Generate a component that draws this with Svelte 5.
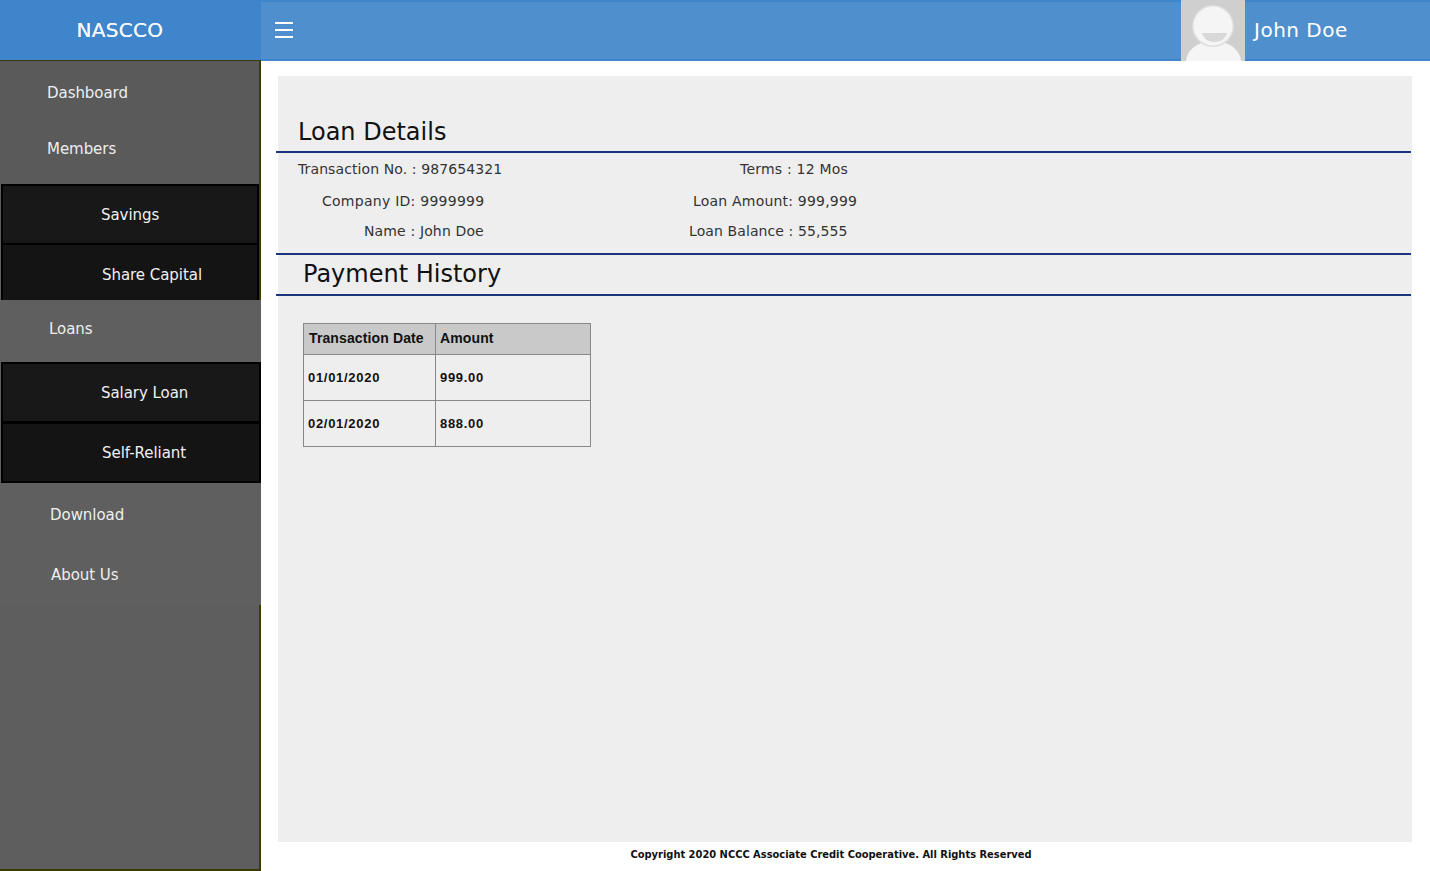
<script lang="ts">
	const menu = [
		{ label: 'Dashboard', pad: 47 },
		{ label: 'Members', pad: 47 }
	];
	const savings = [
		{ label: 'Savings', pad: 98 },
		{ label: 'Share Capital', pad: 99 }
	];
	const loans = [
		{ label: 'Salary Loan', pad: 98 },
		{ label: 'Self-Reliant', pad: 99 }
	];
	const lower = [
		{ label: 'Download', pad: 50 },
		{ label: 'About Us', pad: 51 }
	];
	const payments = [
		{ date: '01/01/2020', amount: '999.00' },
		{ date: '02/01/2020', amount: '888.00' }
	];
</script>

<div class="page">
	<header class="topbar">
		<div class="brand">NASCCO</div>
		<div class="bar">
			<button class="burger" aria-label="Menu">
				<span></span><span></span><span></span>
			</button>
			<div class="user">
				<svg class="avatar" viewBox="0 0 64 61" width="64" height="61" aria-hidden="true">
					<rect width="64" height="61" fill="#cfcfcf" />
					<path d="M5 61c1-12 13-20 27.500-20s26.500 8 27.500 20z" fill="#f5f5f5" />
					<circle cx="32" cy="26" r="21" fill="#dedede" />
					<circle cx="32" cy="26" r="19.500" fill="#f5f5f5" />
					<path d="M21 33h25c-1 5-6 9-12.500 9s-11.500-4-12.500-9z" fill="#d8d8d8" />
				</svg>
				<span class="username">John Doe</span>
			</div>
		</div>
	</header>

	<div class="body">
		<nav class="sidebar">
			<div class="group-top">
				{#each menu as item}
					<a class="item" style="padding-left:{item.pad}px">{item.label}</a>
				{/each}
			</div>
			<div class="sub first">
				{#each savings as item}
					<a class="subitem" style="padding-left:{item.pad}px">{item.label}</a>
				{/each}
			</div>
			<div class="lighter">
				<a class="item loans" style="padding-left:49px">Loans</a>
				<div class="sub second">
					{#each loans as item}
						<a class="subitem" style="padding-left:{item.pad}px">{item.label}</a>
					{/each}
				</div>
				{#each lower as item}
					<a class="item low" style="padding-left:{item.pad}px">{item.label}</a>
				{/each}
			</div>
		</nav>

		<main class="main">
			<section class="panel">
				<h2 class="loan-title">Loan Details</h2>
				<div class="details">
					<div class="row r1"><span class="left l1">Transaction No. : 987654321</span><span class="right t1">Terms : 12 Mos</span></div>
					<div class="row r2"><span class="left l2">Company ID: 9999999</span><span class="right t2">Loan Amount: 999,999</span></div>
					<div class="row r3"><span class="left l3">Name : John Doe</span><span class="right t3">Loan Balance : 55,555</span></div>
				</div>
				<h2 class="pay-title">Payment History</h2>
				<table>
					<thead>
						<tr><th class="c1">Transaction Date</th><th class="c2">Amount</th></tr>
					</thead>
					<tbody>
						{#each payments as p}
							<tr><td>{p.date}</td><td>{p.amount}</td></tr>
						{/each}
					</tbody>
				</table>
			</section>
			<footer class="copy">Copyright 2020 NCCC Associate Credit Cooperative. All Rights Reserved</footer>
		</main>
	</div>
</div>

<style>
	:global(body) {
		margin: 0;
		background: #fff;
		font-family: "DejaVu Sans", Verdana, sans-serif;
	}
	.page {
		width: 1430px;
		height: 871px;
		overflow: hidden;
		display: flex;
		flex-direction: column;
	}
	.topbar {
		height: 61px;
		flex: none;
		display: flex;
		background: linear-gradient(#3f85cb 60px, #fff 60px);
	}
	.brand {
		width: 240px;
		flex: none;
		text-align: center;
		color: #f4f8fc;
		font-size: 20px;
		letter-spacing: .3px;
		text-shadow: 0 0 .5px #f4f8fc;
		line-height: 61px;
	}
	.bar {
		margin-left: 21px;
		flex: 1;
		display: flex;
		justify-content: space-between;
		background: linear-gradient(#3f85cb 2px, #508fce 2px, #508fce 59px, #3f85cb 59px);
		height: 61px;
	}
	.burger {
		margin-left: 14px;
		margin-top: 22px;
		width: 18px;
		height: 16px;
		padding: 0;
		border: 0;
		background: none;
		display: flex;
		flex-direction: column;
		justify-content: space-between;
	}
	.burger span {
		display: block;
		height: 2px;
		background: #fff;
	}
	.user {
		display: flex;
		width: 249px;
		height: 61px;
	}
	.avatar {
		display: block;
		flex: none;
	}
	.username {
		color: #fff;
		font-size: 20px;
		letter-spacing: .5px;
		line-height: 61px;
		margin-left: 9px;
	}
	.body {
		flex: 1;
		display: flex;
		min-height: 0;
	}
	.sidebar {
		width: 259px;
		flex: none;
		height: 808px;
		margin-top: -1px;
		background: #5e5e5e;
		border-right: 2px solid #3b3b00;
		border-bottom: 2px solid #3b3b00;
		border-top: 1px solid #3b3b00;
	}
	.group-top {
		padding-top: 3px;
		height: 120px;
		background: #5a5a5a;
	}
	.item {
		display: block;
		height: 56px;
		line-height: 58px;
		color: #eee;
		font-size: 15px;
		letter-spacing: -.05px;
	}
	.sub {
		background: #000;
		margin-left: 1px;
		display: flex;
		flex-direction: column;
	}
	.sub.first {
		width: 254px;
		padding: 2px 2px 0;
		height: 114px;
		gap: 2px;
	}
	.sub.second {
		width: 256px;
		padding: 2px;
		gap: 3px;
	}
	.subitem {
		display: block;
		height: 57px;
		line-height: 59px;
		background: #181818;
		color: #f0f0f0;
		font-size: 15px;
		letter-spacing: -.05px;
	}
	.sub.first .subitem:last-child {
		height: 55px;
		line-height: 61px;
		background: #141414;
	}
	.sub.second .subitem:last-child {
		background: #141414;
	}
	.lighter {
		width: 261px;
		background: #5f5f5f;
	}
	.item.loans {
		height: 62px;
		line-height: 58px;
	}
	.item.low {
		height: 61px;
		line-height: 64px;
	}
	.item.low:last-child {
		line-height: 62px;
	}
	.main {
		flex: 1;
		min-width: 0;
		display: flex;
		flex-direction: column;
		padding: 15px 18px 0 17px;
	}
	.panel {
		background: #eee;
		height: 766px;
		flex: none;
		box-sizing: border-box;
	}
	h2 {
		margin: 0;
		font-weight: normal;
		color: #111;
		font-size: 24px;
	}
	.loan-title {
		margin-left: -2px;
		padding: 40px 0 0 22px;
		height: 35px;
		line-height: 33px;
		border-bottom: 2px solid #1c347f;
		width: 1113px;
	}
	.details {
		position: relative;
		height: 100px;
		margin-left: -2px;
		border-bottom: 2px solid #1c347f;
		width: 1135px;
		color: #333;
		font-size: 14px;
	}
	.row {
		position: absolute;
		left: 0;
	}
	.row span {
		position: absolute;
		white-space: nowrap;
	}
	.r1 { top: 8px; }
	.r2 { top: 40px; }
	.r3 { top: 70px; }
	.l1 { left: 22px; letter-spacing: .1px; }
	.l2 { left: 46px; letter-spacing: .26px; }
	.l3 { left: 88px; letter-spacing: .14px; }
	.t1 { left: 464px; letter-spacing: .22px; }
	.t2 { left: 417px; letter-spacing: .2px; }
	.t3 { left: 413px; letter-spacing: .1px; }
	.pay-title {
		margin-left: -2px;
		padding-left: 27px;
		height: 39px;
		line-height: 38px;
		border-bottom: 2px solid #1c347f;
		width: 1108px;
	}
	table {
		margin: 27px 0 0 25px;
		border-collapse: collapse;
		width: 288px;
		color: #111;
		table-layout: fixed;
		font-family: "Liberation Sans", Arial, sans-serif;
	}
	th, td {
		border: 1px solid #888;
		text-align: left;
		padding: 0 4px;
		font-size: 13px;
		font-weight: bold;
		letter-spacing: .7px;
	}
	th {
		background: #c9c9c9;
		height: 28px;
		font-size: 14px;
		letter-spacing: .12px;
		padding-bottom: 2px;
		white-space: nowrap;
	}
	td {
		height: 45px;
	}
	th.c1 {
		width: 122px;
		padding-left: 5px;
	}
	.copy {
		text-align: center;
		font-size: 11px;
		font-weight: bold;
		font-stretch: condensed;
		color: #111;
		padding: 6px 28px 0 0;
	}
</style>
